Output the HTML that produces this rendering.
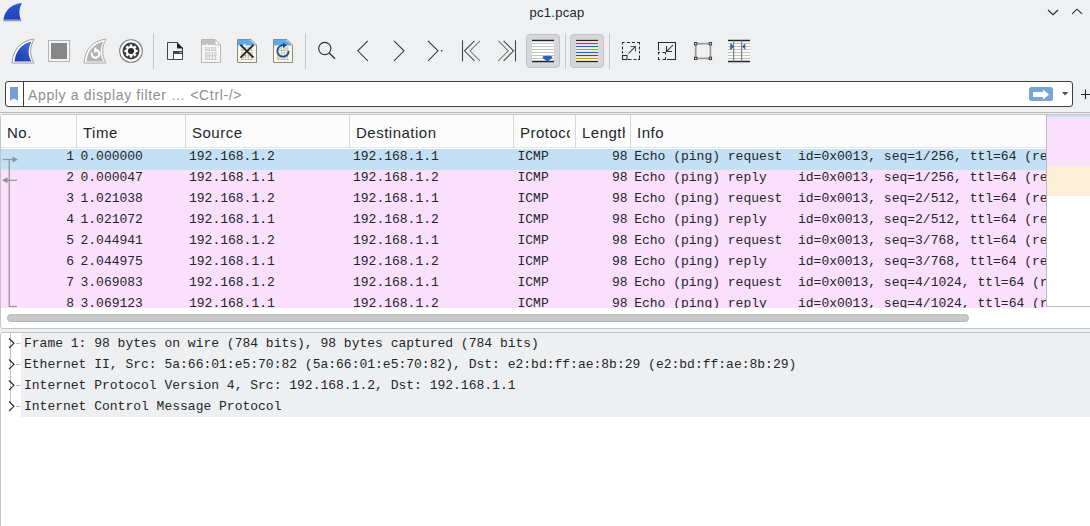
<!DOCTYPE html>
<html><head><meta charset="utf-8">
<style>
*{margin:0;padding:0;box-sizing:border-box}
html,body{width:1090px;height:526px;overflow:hidden;background:#eff0f1;font-family:"Liberation Sans",sans-serif;color:#232629;position:relative}
.a{position:absolute}
svg{position:absolute;left:0;top:0;overflow:visible}
#title{left:0;top:4px;width:1114px;text-align:center;font-size:13px;line-height:18px;letter-spacing:0.3px}
#filter{left:5px;top:81px;width:1068px;height:26px;border:1px solid #3d4043;border-radius:3px;background:#fff}
#bmsep{left:23px;top:82px;width:1px;height:24px;background:#3d4043}
#ph{left:28px;top:86px;font-size:14px;line-height:18px;color:#8c8f92;letter-spacing:0.64px;white-space:nowrap}
#topline{left:0;top:112px;width:1090px;height:1px;background:#b8b9bb}
#plist{left:0;top:114px;width:1100px;height:215px;background:#fff;border:1px solid #c4c5c7;border-radius:3px}
.hd{position:absolute;top:115px;height:33px;font-size:15px;line-height:36px;letter-spacing:0.5px;overflow:hidden;white-space:nowrap;padding-left:7px}
#hbg{left:1px;top:115px;width:1089px;height:33px;background:#fcfcfc;border-bottom:1px solid #e6e6e6}

.hsep{position:absolute;top:115px;width:1px;height:33px;background:#d6d7d9}
#rows{left:1px;top:149px;width:1045px;height:159px;overflow:hidden}
.row{position:absolute;left:0;width:1045px;height:21px;font-family:"Liberation Mono",monospace;font-size:13px;line-height:16px;white-space:pre;background:#fbe0fd}
.row.sel{background:#c3e0f4}
.row span{position:absolute;top:0}
#details{left:0;top:332px;width:1100px;height:220px;background:#fff;border:1px solid #c4c5c7;border-radius:3px}
.drow{position:absolute;left:21px;width:1069px;height:21px;background:#eeeff1;font-family:"Liberation Mono",monospace;font-size:13px;line-height:21px;white-space:pre;padding-left:3px}

</style></head><body>
<div class="a" id="title">pc1.pcap</div>
<svg width="1090" height="80" viewBox="0 0 1090 80">
 <!-- app fin -->
 <defs><linearGradient id="fg" x1="0" y1="0" x2="0.3" y2="1"><stop offset="0" stop-color="#1f6ae8"/><stop offset="0.5" stop-color="#2550c8"/><stop offset="1" stop-color="#2440b0"/></linearGradient></defs>
 <path d="M3.5 20.5 C4 12 10 4 22 3 C19 8 18.5 15 21.2 20.5 Z" fill="url(#fg)"/>
 <path d="M3.8 19.2 L21 19.2 L21.2 20.4 L3.6 20.4Z" fill="#6aa0ec" opacity="0.85"/>
 <path d="M3.3 20.4 L21.5 20.4 L21.5 21.3 L3.3 21.3Z" fill="#a09c98"/>
 <!-- window chevrons -->
 <path d="M1048 10 L1053 14.7 L1058 10" fill="none" stroke="#232629" stroke-width="1.05"/>
 <path d="M1072 13.9 L1077 9.2 L1082 13.9" fill="none" stroke="#232629" stroke-width="1.05"/>
 <!-- capture start fin -->
 <path d="M12 63 C13 50 20 41 34 39 C30 46 29 55 34 63 Z" fill="#fff" stroke="#9a9a9a" stroke-width="1"/>
 <defs><linearGradient id="fg2" x1="0.8" y1="0" x2="0.2" y2="1"><stop offset="0" stop-color="#3d6ad8"/><stop offset="1" stop-color="#1c3bb0"/></linearGradient></defs><path d="M14.5 61.5 C15.5 51 22 43.5 31.5 41.5 C28 48 27.5 55 31.5 61.5 Z" fill="url(#fg2)"/>
 <!-- stop -->
 <rect x="48.5" y="40.5" width="21" height="21" fill="#f4f4f4" stroke="#b4b4b4"/>
 <rect x="51" y="43" width="16" height="16" fill="#868887"/>
 <!-- restart fin -->
 <path d="M84 63 C85 50 92 41 106 39 C102 46 101 55 106 63 Z" fill="#fff" stroke="#a8a8a8" stroke-width="1"/>
 <path d="M86.5 61.5 C87.5 51 94 43.5 103.5 41.5 C100 48 99.5 55 103.5 61.5 Z" fill="#b4b4b4"/>
 <path d="M92 52.5 A3.8 3.8 0 1 0 96.5 50.2" fill="none" stroke="#fff" stroke-width="2"/>
 <path d="M94.5 47 L98.5 50.5 L94 53Z" fill="#fff"/>
 <!-- options gear -->
 <circle cx="131" cy="51" r="11.3" fill="#fff" stroke="#77797b" stroke-width="1.1"/>
 <circle cx="131" cy="51" r="8.5" fill="#3a3c3f"/>
 <g fill="#fff">
  <circle cx="131" cy="51" r="5.1"/>
  <rect x="129.8" y="44.4" width="2.4" height="13.2"/>
  <rect x="124.4" y="49.8" width="13.2" height="2.4"/>
  <rect x="129.8" y="44.4" width="2.4" height="13.2" transform="rotate(45 131 51)"/>
  <rect x="129.8" y="44.4" width="2.4" height="13.2" transform="rotate(-45 131 51)"/>
 </g>
 <circle cx="131" cy="51" r="3.1" fill="#2e2a2c"/>
 <!-- separators -->
 <rect x="153" y="33" width="1" height="36" fill="#c4c6c8"/>
 <rect x="305" y="33" width="1" height="36" fill="#c4c6c8"/>
 <rect x="565" y="33" width="1" height="36" fill="#c4c6c8"/>
 <rect x="609" y="33" width="1" height="36" fill="#c4c6c8"/>
 <!-- open -->
 <g fill="none" stroke="#3a3d40" stroke-width="0.95">
 <path d="M173.5 59.5 H167.5 V42.5 H177.5"/>
 <path d="M182.5 48 V51"/>
 <rect x="173.5" y="51.5" width="9" height="8" fill="#fff"/>
 </g>
 <path d="M177 42 L183 48 V48.6 H177 Z" fill="#1e2124"/>
 <path d="M173.2 52.8 L175 51.2 H178.5 L179 52.5 H182.8 V54 H173.2Z" fill="#45484b"/>
 <!-- doc grey -->
 <path d="M201.5 39.5 H215 L220.5 45 V62.5 H201.5 Z" fill="#f6f6f6" stroke="#b7b7b7"/>
 <path d="M202 40 H215 L216 45 H208 Q207.5 42 206.5 45 H202Z" fill="#c2c2c2"/>
 <path d="M215 39.5 L220.5 45 H215Z" fill="#fafafa" stroke="#b7b7b7" stroke-width="0.8"/>
 <g font-family="Liberation Mono" font-size="5" fill="#a6a6a6"><text x="204.8" y="51.2">0101</text><text x="204.8" y="55.6">0110</text><text x="204.8" y="60.2">0111</text></g>
 <!-- doc close -->
 <path d="M237.5 39.5 H251 L256.5 45 V62.5 H237.5 Z" fill="#fbf7e3" stroke="#8a8a8a"/>
 <path d="M238 40 H250 L256 45.5 H238Z" fill="#5ea9e8"/>
 <path d="M243 45.5 Q245 42 246 45.5Z" fill="#fff"/>
 <g font-family="Liberation Mono" font-size="5" fill="#8f8f8f"><text x="240.8" y="51.2">0101</text><text x="240.8" y="55.6">0110</text><text x="240.8" y="60.2">0111</text></g>
 <path d="M240.5 44.8 L253.5 57.6 M253.5 44.8 L240.5 57.6" stroke="#1f2022" stroke-width="1.8"/>
 <!-- doc reload -->
 <path d="M273.5 39.5 H287 L292.5 45 V62.5 H273.5 Z" fill="#fbf7e3" stroke="#8a8a8a"/>
 <path d="M274 40 H286 L292 45.5 H274Z" fill="#5ea9e8"/>
 <g font-family="Liberation Mono" font-size="5" fill="#8f8f8f"><text x="276.8" y="51.2">0101</text><text x="276.8" y="55.6">0110</text><text x="276.8" y="60.2">0111</text></g>
 <path d="M283.5 45.3 A5.7 5.7 0 1 0 288.7 51" fill="none" stroke="#1e4f9c" stroke-width="1.8"/>
 <path d="M283 42.6 L287.3 45.3 L283 48Z" fill="#1e4f9c"/>
 <!-- find -->
 <circle cx="324.8" cy="48.5" r="6.1" fill="none" stroke="#2f3235" stroke-width="1.15"/>
 <path d="M329.2 53 L335 58.8" stroke="#2f3235" stroke-width="1.35"/>
 <!-- prev/next -->
 <path d="M367.8 40.8 L357.8 50.8 L367.8 60.8" fill="none" stroke="#34373a" stroke-width="1.05"/>
 <path d="M394 40.8 L404 50.8 L394 60.8" fill="none" stroke="#34373a" stroke-width="1.05"/>
 <path d="M428 40.8 L438 50.8 L428 60.8" fill="none" stroke="#34373a" stroke-width="1.05"/>
 <rect x="441" y="50.1" width="1.4" height="1.4" fill="#34373a"/>
 <!-- first/last -->
 <path d="M462.5 40.3 V61.5" stroke="#45484b" stroke-width="1.1"/>
 <path d="M474.5 40.8 L464.5 50.8 L474.5 60.8" fill="none" stroke="#45484b" stroke-width="1.05"/>
 <path d="M480 40.8 L470 50.8 L480 60.8" fill="none" stroke="#767977" stroke-width="1.05"/>
 <path d="M515.5 40.3 V61.5" stroke="#45484b" stroke-width="1.1"/>
 <path d="M498.3 40.8 L508.3 50.8 L498.3 60.8" fill="none" stroke="#767977" stroke-width="1.05"/>
 <path d="M503.6 40.8 L513.6 50.8 L503.6 60.8" fill="none" stroke="#45484b" stroke-width="1.05"/>
 <!-- pressed autoscroll -->
 <rect x="526.5" y="34.5" width="33" height="33" rx="3.5" fill="#d6d7d9" stroke="#c2c3c5"/>
 <rect x="532" y="41" width="22" height="20" fill="#fff"/>
 <g stroke="#c4c4b8" stroke-width="1.2"><path d="M532 43.5H554M532 46.5H554M532 49.5H554M532 52.5H554M532 55.5H554M532 58.5H554"/></g>
 <path d="M532 40.5H554M532 61.5H554" stroke="#232629" stroke-width="1.3"/>
 <path d="M543 56.2 Q547.5 55.2 552 56.2 Q553.5 57.5 550 59.8 L547.5 61.6 L545 59.8 Q541.5 57.5 543 56.2Z" fill="#2c62b3"/>
 <!-- pressed colorize -->
 <rect x="570.5" y="34.5" width="33" height="33" rx="3.5" fill="#d6d7d9" stroke="#c2c3c5"/>
 <rect x="576" y="41" width="22" height="20" fill="#fff"/>
 <path d="M576 40.5H598" stroke="#232629" stroke-width="1.3"/>
 <path d="M576 43.5H598" stroke="#e8262a" stroke-width="1.3"/>
 <path d="M576 46.5H598" stroke="#2a5fbf" stroke-width="1.3"/>
 <path d="M576 49.5H598" stroke="#66c60f" stroke-width="1.3"/>
 <path d="M576 52.5H598" stroke="#2a5fbf" stroke-width="1.3"/>
 <path d="M576 55.5H598" stroke="#5e3b7e" stroke-width="1.3"/>
 <path d="M576 58.5H598" stroke="#c9a00a" stroke-width="1.3"/>
 <path d="M576 61.5H598" stroke="#232629" stroke-width="1.3"/>
 <!-- zoom in -->
 <g fill="none" stroke="#2a2d30" stroke-width="1.05">
 <path d="M622 42.5H624.5M627 42.5H630M632 42.5H635M637 42.5H640M628 59.5H631.5M633.5 59.5H636.5M638 59.5H640M622.5 42V44.5M622.5 46.5V49.5M622.5 51V53.5M639.5 42V44.5M639.5 46.5V49.5M639.5 51V53.5M639.5 55.5V60"/>
 <rect x="622.5" y="55.5" width="4.5" height="4"/>
 <path d="M628.5 53.5 L635.3 46.7"/>
 <path d="M630.5 46.5 H635.5 V51.5" stroke="#555759"/>
 </g>
 <!-- zoom out -->
 <g fill="none" stroke="#2a2d30" stroke-width="1.05">
 <path d="M658.5 50.5 V42.5 H675.5 V59.5 H667"/>
 <path d="M658 52.5H660M662.5 52.5H666M665.5 52.5V54.5M665.5 57V60M658 59.5H660M662.5 59.5H666M658.5 52.5V54.5M658.5 57V60"/>
 <path d="M673 45 L666.8 51.2"/>
 <path d="M666.5 46 V51.5 H672"/>
 </g>
 <!-- normal size -->
 <rect x="695.7" y="43.7" width="14.7" height="14.7" fill="none" stroke="#999" stroke-width="1.7"/>
 <g fill="#e0e0e0" stroke="#2f3236" stroke-width="0.9"><rect x="694.5" y="42.5" width="2.4" height="2.4"/><rect x="709.2" y="42.5" width="2.4" height="2.4"/><rect x="694.5" y="57.2" width="2.4" height="2.4"/><rect x="709.2" y="57.2" width="2.4" height="2.4"/></g>
 <!-- resize columns -->
 <rect x="728" y="41" width="22" height="20" fill="#fafaf8"/>
 <g stroke="#c4c4b8" stroke-width="1.2"><path d="M728 43.5H750M728 46.5H750M728 49.5H750M728 52.5H750M728 55.5H750M728 58.5H750"/></g>
 <path d="M728 40.5H750M728 61.5H750" stroke="#232629" stroke-width="1.3"/>
 <path d="M733.6 40.5V61.5M741.6 40.5V61.5" stroke="#7e8082" stroke-width="1.2"/>
 <path d="M730.2 43.5 Q730 43.4 731 43.6 L734 46.6 L731 49.8 Q730 50 730.2 49.8Z M745.3 43.5 L742 46.6 L745.3 49.8Z" fill="#2c62b3"/>
 <!-- filter bar -->
</svg>
<div class="a" id="filter"></div>
<div class="a" id="bmsep"></div>
<svg width="1090" height="120">
 <path d="M10 87 H18 V100.8 L14 98.6 L10 100.8 Z" fill="#74a0d6"/>
 <rect x="1029" y="87" width="24" height="14" rx="2.5" fill="#79a4d6"/>
 <path d="M1033 92 H1043 V89.5 L1049 94.5 L1043 99.5 V97 H1033 Z" fill="#fff"/>
 <path d="M1062 92 H1068.3 L1065.15 95.5 Z" fill="#4d4f52"/>
 <path d="M1085.5 89.5 V99 M1081 94.5 H1090" stroke="#232629" stroke-width="1.1"/>
</svg>
<div class="a" id="ph">Apply a display filter … &lt;Ctrl-/&gt;</div>
<div class="a" id="topline"></div>
<div class="a" id="plist"></div>
<div class="a" id="hbg"></div>
<div class="hd" style="left:0px;width:71px"><span>No.</span></div>
<div class="hd" style="left:76px;width:104px"><span>Time</span></div>
<div class="hsep" style="left:76px"></div>
<div class="hd" style="left:185px;width:159px"><span>Source</span></div>
<div class="hsep" style="left:185px"></div>
<div class="hd" style="left:349px;width:159px"><span>Destination</span></div>
<div class="hsep" style="left:349px"></div>
<div class="hd" style="left:513px;width:57px"><span>Protocol</span></div>
<div class="hsep" style="left:513px"></div>
<div class="hd" style="left:575px;width:50px"><span>Length</span></div>
<div class="hsep" style="left:575px"></div>
<div class="hd" style="left:630px;width:411px"><span>Info</span></div>
<div class="hsep" style="left:630px"></div>
<div class="a" id="rows">
<div class="row sel" style="top:0px"><span class="r" style="right:972px">1</span><span style="left:79.5px">0.000000</span><span style="left:188px">192.168.1.2</span><span style="left:352px">192.168.1.1</span><span style="left:516.5px">ICMP</span><span class="r" style="right:418.5px">98</span><span style="left:633.2px">Echo (ping) request  id=0x0013, seq=1/256, ttl=64 (reply in 2)</span></div>
<div class="row" style="top:21px"><span class="r" style="right:972px">2</span><span style="left:79.5px">0.000047</span><span style="left:188px">192.168.1.1</span><span style="left:352px">192.168.1.2</span><span style="left:516.5px">ICMP</span><span class="r" style="right:418.5px">98</span><span style="left:633.2px">Echo (ping) reply    id=0x0013, seq=1/256, ttl=64 (request in 1)</span></div>
<div class="row" style="top:42px"><span class="r" style="right:972px">3</span><span style="left:79.5px">1.021038</span><span style="left:188px">192.168.1.2</span><span style="left:352px">192.168.1.1</span><span style="left:516.5px">ICMP</span><span class="r" style="right:418.5px">98</span><span style="left:633.2px">Echo (ping) request  id=0x0013, seq=2/512, ttl=64 (reply in 4)</span></div>
<div class="row" style="top:63px"><span class="r" style="right:972px">4</span><span style="left:79.5px">1.021072</span><span style="left:188px">192.168.1.1</span><span style="left:352px">192.168.1.2</span><span style="left:516.5px">ICMP</span><span class="r" style="right:418.5px">98</span><span style="left:633.2px">Echo (ping) reply    id=0x0013, seq=2/512, ttl=64 (request in 3)</span></div>
<div class="row" style="top:84px"><span class="r" style="right:972px">5</span><span style="left:79.5px">2.044941</span><span style="left:188px">192.168.1.2</span><span style="left:352px">192.168.1.1</span><span style="left:516.5px">ICMP</span><span class="r" style="right:418.5px">98</span><span style="left:633.2px">Echo (ping) request  id=0x0013, seq=3/768, ttl=64 (reply in 6)</span></div>
<div class="row" style="top:105px"><span class="r" style="right:972px">6</span><span style="left:79.5px">2.044975</span><span style="left:188px">192.168.1.1</span><span style="left:352px">192.168.1.2</span><span style="left:516.5px">ICMP</span><span class="r" style="right:418.5px">98</span><span style="left:633.2px">Echo (ping) reply    id=0x0013, seq=3/768, ttl=64 (request in 5)</span></div>
<div class="row" style="top:126px"><span class="r" style="right:972px">7</span><span style="left:79.5px">3.069083</span><span style="left:188px">192.168.1.2</span><span style="left:352px">192.168.1.1</span><span style="left:516.5px">ICMP</span><span class="r" style="right:418.5px">98</span><span style="left:633.2px">Echo (ping) request  id=0x0013, seq=4/1024, ttl=64 (reply in 8)</span></div>
<div class="row" style="top:147px"><span class="r" style="right:972px">8</span><span style="left:79.5px">3.069123</span><span style="left:188px">192.168.1.1</span><span style="left:352px">192.168.1.2</span><span style="left:516.5px">ICMP</span><span class="r" style="right:418.5px">98</span><span style="left:633.2px">Echo (ping) reply    id=0x0013, seq=4/1024, ttl=64 (request in 7)</span></div>
</div>
<svg width="1090" height="526">
 <!-- related packets -->
 <g stroke="#8e9292" stroke-width="1.2" fill="none">
  <path d="M9.2 159.5 V306.5 H17"/>
  <path d="M3 159.5 H13"/>
  <path d="M7 180.3 H17"/>
 </g>
 <path d="M12.5 156.5 L18 159.5 L12.5 162.5Z M2 180.3 L7.5 177.3 L7.5 183.3Z" fill="#8e9292"/>
 <!-- minimap -->
 <rect x="1046" y="115" width="1" height="192" fill="#b9babc"/>
 <rect x="1047" y="115" width="43" height="2" fill="#c3e0f4"/>
 <rect x="1047" y="117" width="43" height="49" fill="#fbe0fd"/>
 <rect x="1047" y="166" width="43" height="30" fill="#fcefd9"/>
 <rect x="1047" y="306" width="43" height="1" fill="#b9babc"/>
 <!-- h scrollbar -->
 <rect x="7.5" y="314.7" width="961" height="6.8" rx="3.4" fill="#c8c9ca" stroke="#b1b2b4"/>
</svg>
<div class="a" id="details"></div>
<svg width="1090" height="526">
 <path d="M10.5 333 V402" stroke="#c2c3c5"/>
 <g fill="none" stroke="#232629" stroke-width="1.1">
  <path d="M9 338.5 L14 343.3 L9 348"/>
  <path d="M9 359.5 L14 364.3 L9 369"/>
  <path d="M9 380.5 L14 385.3 L9 390"/>
  <path d="M9 401.5 L14 406.3 L9 411"/>
 </g>
 <g stroke="#b5b6b8"><path d="M16 343.5H20.5M16 364.5H20.5M16 385.5H20.5M16 406.5H20.5"/></g>
</svg>
<div class="drow" style="top:333px">Frame 1: 98 bytes on wire (784 bits), 98 bytes captured (784 bits)</div>
<div class="drow" style="top:354px">Ethernet II, Src: 5a:66:01:e5:70:82 (5a:66:01:e5:70:82), Dst: e2:bd:ff:ae:8b:29 (e2:bd:ff:ae:8b:29)</div>
<div class="drow" style="top:375px">Internet Protocol Version 4, Src: 192.168.1.2, Dst: 192.168.1.1</div>
<div class="drow" style="top:396px">Internet Control Message Protocol</div>
</body></html>
